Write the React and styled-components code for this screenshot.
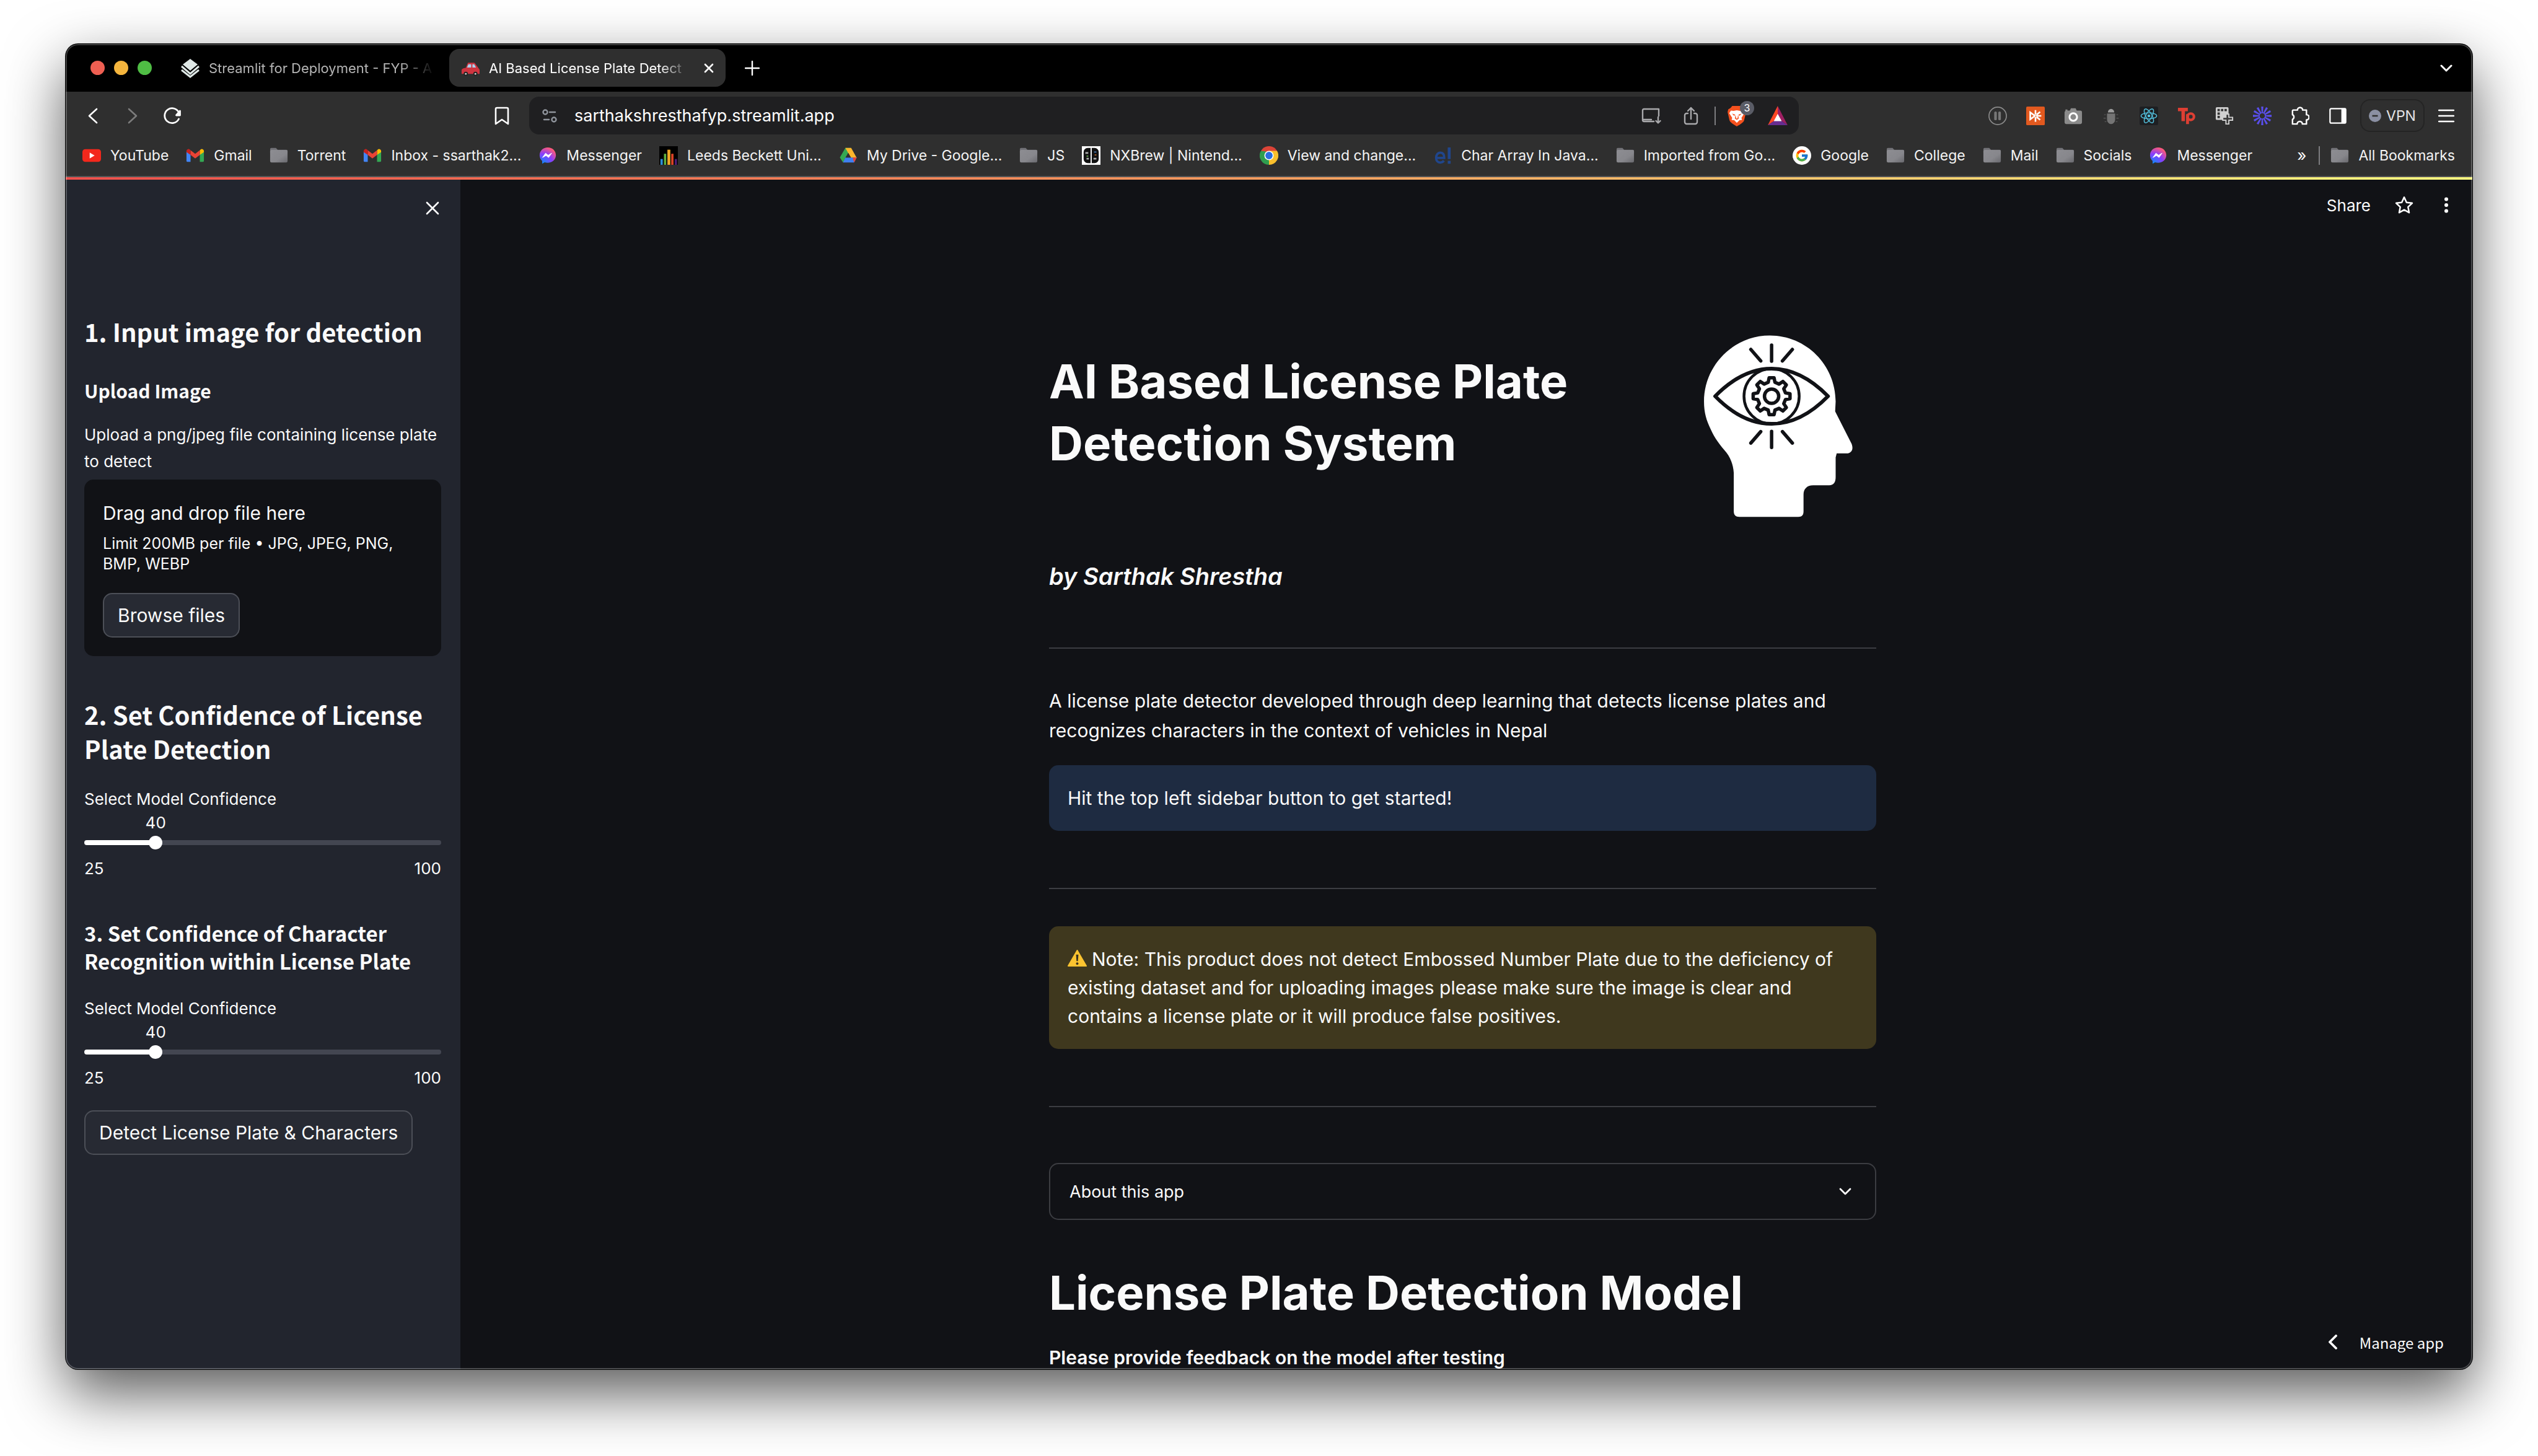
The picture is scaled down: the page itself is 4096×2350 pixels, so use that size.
import React, { useState } from "react";
import styled, { createGlobalStyle, css } from "styled-components";
import { FcGoogle } from "react-icons/fc";

const ui = `"Inter", "Liberation Sans", sans-serif`;
const heading = `"Noto Sans CJK JP", "Noto Sans", sans-serif`;

const Global = createGlobalStyle`
  *, *::before, *::after { box-sizing: border-box; }
  body { margin: 0; background: #fff; font-family: ${ui}; color: #fafafa; }
  h1, h2, h3, h4, p { margin: 0; }
  a { color: inherit; text-decoration: none; }
  button, input { font-family: inherit; color: inherit; }
  svg { display: block; flex: none; }
`;

/* ---------- Window ---------- */
const Desktop = styled.div`
  display: flex;
  height: 100vh;
  padding: 71px 106px 140px;
  background: #fff;
  overflow: hidden;
`;
const BrowserWindow = styled.div`
  position: relative;
  flex: 1;
  min-width: 0;
  display: flex;
  flex-direction: column;
  border-radius: 20px;
  overflow: hidden;
  background: #111216;
  box-shadow: 0 0 0 1px #000, 0 38px 96px rgba(0, 0, 0, 0.66);
  &::after {
    content: "";
    position: absolute;
    inset: 0;
    border-radius: inherit;
    box-shadow: inset 0 0 0 2px rgba(255, 255, 255, 0.24);
    pointer-events: none;
  }
`;
const bare = css`
  border: 0;
  padding: 0;
  background: none;
  cursor: pointer;
`;

/* ---------- Tab strip ---------- */
const TabStrip = styled.header`
  display: flex;
  align-items: center;
  height: 77px;
  padding: 0 10px 0 40px;
  background: #000;
`;
const Lights = styled.div`
  display: flex;
  gap: 15px;
  margin-right: 27px;
`;
const Light = styled.button`
  ${bare}
  width: 23px;
  height: 23px;
  border-radius: 50%;
  background: ${(p) => p.$color};
`;
const Tab = styled.div`
  display: flex;
  align-items: center;
  gap: 14px;
  width: 446px;
  height: 61px;
  padding: 0 13px 0 19px;
  margin-right: 7px;
  border-radius: 16px;
  background: ${(p) => (p.$active ? "#2f2f2f" : "transparent")};
  color: ${(p) => (p.$active ? "#fff" : "#b4b4b4")};
`;
const TabTitle = styled.button`
  ${bare}
  flex: 1;
  min-width: 0;
  text-align: left;
  white-space: nowrap;
  font-size: 22px;
  line-height: 32px;
  mask-image: linear-gradient(90deg, #000 84%, transparent 99%);
`;
const IconButton = styled.button`
  ${bare}
  display: flex;
  align-items: center;
  justify-content: center;
  width: ${(p) => p.$w || 61}px;
  height: 61px;
`;
const Push = styled.div`
  flex: 1;
`;

/* ---------- Toolbar ---------- */
const Toolbar = styled.nav`
  background: #2f2f2f;
  border-bottom: 2px solid #565656;
`;
const ToolbarRow = styled.div`
  display: flex;
  align-items: center;
  padding: 8px 12px 0;
`;
const NavGroup = styled.div`
  display: flex;
  width: 724px;
  margin-right: 12px;
`;
const AddressBar = styled.div`
  display: flex;
  align-items: center;
  flex: 1;
  height: 61px;
  padding: 0 2px 0 1px;
  border-radius: 16px;
  background: #1f1f21;
`;
const Address = styled.input`
  flex: 1;
  min-width: 0;
  border: 0;
  outline: 0;
  padding: 0 8px;
  background: none;
  color: #fff;
  font-size: 27px;
`;
const Separator = styled.span`
  width: 2px;
  height: 30px;
  margin-left: 6px;
  background: #7d7d80;
`;
const ShieldBadge = styled.span`
  position: absolute;
  top: 7px;
  right: 6px;
  width: 23px;
  height: 23px;
  border-radius: 50%;
  background: #5a5c66;
  color: #fff;
  font-size: 16px;
  line-height: 23px;
  text-align: center;
`;
const ShieldButton = styled(IconButton)`
  position: relative;
`;
const ExtensionGroup = styled.div`
  display: flex;
  align-items: center;
  justify-content: flex-end;
  width: 1075px;
`;
const VpnButton = styled.button`
  ${bare}
  display: flex;
  align-items: center;
  justify-content: center;
  gap: 8px;
  width: 104px;
  height: 53px;
  margin: 0 4px 0 6px;
  border: 2px solid #242424;
  border-radius: 16px;
  color: #e4e4e6;
  font-size: 23px;
`;

/* ---------- Bookmarks ---------- */
const BookmarkBar = styled.div`
  display: flex;
  align-items: center;
  height: 67px;
  padding: 0 28px 0 27px;
`;
const BookmarkList = styled.div`
  display: flex;
  gap: 28px;
`;
const Bookmark = styled.a`
  display: flex;
  align-items: center;
  gap: 15px;
  font-size: 23px;
  line-height: 30px;
  color: #f4f4f4;
  white-space: nowrap;
`;
const Overflow = styled.button`
  ${bare}
  padding: 0 14px;
  font-size: 26px;
  line-height: 30px;
`;
const AllBookmarks = styled(Bookmark)`
  margin-left: 17px;
`;

/* ---------- Page ---------- */
const Rainbow = styled.div`
  height: 4px;
  flex: none;
  background: linear-gradient(90deg, #ee4f4b, #f79c5e 50%, #fffd80);
`;
const Page = styled.div`
  display: flex;
  flex: 1;
  min-height: 0;
`;
const Sidebar = styled.aside`
  display: flex;
  flex-direction: column;
  flex: none;
  width: 637px;
  padding: 0 31px 0 30px;
  background: #22252e;
`;
const SidebarTop = styled.div`
  display: flex;
  justify-content: flex-end;
  height: 221px;
  padding-top: 15px;
  margin-right: -16px;
`;
const SideHeading = styled.h2`
  font-family: ${heading};
  font-weight: 700;
  font-size: ${(p) => p.$size || 40}px;
  line-height: ${(p) => p.$line || 55}px;
  margin-top: ${(p) => p.$gap || 0}px;
`;
const FieldLabel = styled.label`
  font-size: 26px;
  line-height: 43px;
  margin-top: 32px;
`;
const DropZone = styled.section`
  display: flex;
  flex-direction: column;
  align-items: flex-start;
  margin-top: 8px;
  padding: 30px;
  border-radius: 15px;
  background: #111216;
`;
const DropTitle = styled.p`
  font-size: 30px;
  line-height: 48px;
`;
const DropHint = styled.p`
  margin: 9px 0 30px;
  font-size: 25px;
  line-height: 33px;
`;
const OutlineButton = styled.button`
  align-self: flex-start;
  height: 72px;
  margin-top: ${(p) => p.$gap || 0}px;
  padding: 0 22px;
  border: 2px solid #4c4f57;
  border-radius: 15px;
  background: #272a33;
  font-size: 30px;
  cursor: pointer;
`;
const SliderValue = styled.output`
  display: block;
  width: ${(p) => p.$percent * 2}%;
  margin: 1px 0 6px;
  text-align: center;
  font-size: 26px;
  line-height: 31px;
`;
const SliderTrack = styled.div`
  display: flex;
  align-items: center;
  height: 8px;
  margin: 7px 0;
  border-radius: 4px;
  background: linear-gradient(90deg, #fff ${(p) => p.$percent}%, #434651 ${(p) => p.$percent}%);
`;
const SliderInput = styled.input`
  appearance: none;
  flex: 1;
  height: 22px;
  margin: 0 -11px;
  background: none;
  &::-webkit-slider-thumb {
    appearance: none;
    width: 22px;
    height: 22px;
    border-radius: 50%;
    background: #fff;
  }
`;
const SliderEnds = styled.div`
  display: flex;
  justify-content: space-between;
  margin-top: 16px;
  font-size: 26px;
  line-height: 30px;
`;

const Main = styled.main`
  position: relative;
  flex: 1;
  min-width: 0;
  overflow: hidden;
  padding-right: 12px;
`;
const AppHeader = styled.div`
  display: flex;
  align-items: center;
  justify-content: flex-end;
  height: 82px;
  margin: 0 -4px 153px 0;
`;
const ShareButton = styled.button`
  ${bare}
  font-size: 26px;
  margin-right: 20px;
`;
const Column = styled.div`
  display: flex;
  flex-direction: column;
  max-width: 1335px;
  margin: 0 auto;
`;
const Hero = styled.div`
  display: grid;
  grid-template-columns: 3fr 1fr;
  gap: 30px;
`;
const Title = styled.h1`
  font-weight: 700;
  font-size: 76px;
  line-height: ${(p) => p.$line || 100}px;
  padding-top: ${(p) => p.$pad || 0}px;
`;
const Byline = styled.h3`
  margin-top: 56px;
  font-size: 38px;
  line-height: 46px;
  font-weight: 600;
  font-style: italic;
`;
const Rule = styled.hr`
  width: 100%;
  height: 2px;
  margin: 92px 0 0;
  border: 0;
  background: #3c3d42;
`;
const Paragraph = styled.p`
  margin: 60px 0 32px;
  font-size: 30px;
  line-height: 48px;
`;
const Alert = styled.div`
  margin-top: ${(p) => p.$gap || 0}px;
  padding: 30px;
  border-radius: 15px;
  background: ${(p) => p.$color};
  font-size: 30px;
  line-height: 46px;
`;
const InlineIcon = styled.span`
  display: inline-block;
  margin-right: 8px;
  vertical-align: -3px;
`;
const Expander = styled.details`
  margin: 90px 0 71px;
  border: 2px solid #3c3d42;
  border-radius: 15px;
`;
const ExpanderSummary = styled.summary`
  display: flex;
  align-items: center;
  justify-content: space-between;
  height: 88px;
  padding: 0 38px 0 31px;
  font-size: 27px;
  list-style: none;
  cursor: pointer;
`;
const Feedback = styled.h4`
  margin-top: 40px;
  font-size: 30px;
  line-height: 38px;
  font-weight: 600;
`;
const ManageApp = styled.button`
  ${bare}
  position: absolute;
  right: 46px;
  bottom: 14px;
  display: flex;
  align-items: center;
  gap: 36px;
  height: 60px;
  font-family: ${heading};
  font-size: 24px;
`;

/* ---------- Icons ---------- */
const Line = ({ w = 24, h = 24, box = "0 0 24 24", sw = 2, color = "#fff", children }) => (
  <svg width={w} height={h} viewBox={box} fill="none" stroke={color} strokeWidth={sw} strokeLinecap="round" strokeLinejoin="round">
    {children}
  </svg>
);
const Pic = ({ size = 30, box = "0 0 32 32", children }) => (
  <svg width={size} height={size} viewBox={box}>{children}</svg>
);

const Folder = () => (
  <Pic>
    <defs>
      <linearGradient id="folder" x1="0" y1="0" x2="1" y2="1">
        <stop offset="0" stopColor="#8d8d92" />
        <stop offset=".6" stopColor="#87878c" />
        <stop offset="1" stopColor="#69696e" />
      </linearGradient>
    </defs>
    <path d="M1 5a2 2 0 0 1 2-2h8l3 3h15a2 2 0 0 1 2 2v3H1z" fill="#727277" />
    <rect x="1" y="6.500" width="30" height="21.500" rx="2.500" fill="url(#folder)" />
  </Pic>
);
const Gmail = () => (
  <Pic>
    <path d="M1 8v17a2 2 0 0 0 2 2h5V13z" fill="#4285f4" />
    <path d="M31 8v17a2 2 0 0 1-2 2h-5V13z" fill="#34a853" />
    <path d="M24 7v8l7-5V8.500c0-3-3.500-4.500-5.500-3z" fill="#fbbc04" />
    <path d="M8 15V7l8 6 8-6v8l-8 6z" fill="#ea4335" />
    <path d="M1 8.500V10l7 5V7L6.500 5.500C4.500 4 1 5.500 1 8.500z" fill="#c5221f" />
  </Pic>
);
const YouTube = () => (
  <Pic>
    <rect x="0" y="5" width="32" height="22" rx="5" fill="#f3281c" />
    <path d="M12.500 11v10l8.500-5z" fill="#fff" />
  </Pic>
);
const Messenger = () => (
  <Pic>
    <defs>
      <radialGradient id="msgr" cx=".2" cy="1" r="1.100">
        <stop offset="0" stopColor="#0a8dff" />
        <stop offset=".55" stopColor="#8a3dff" />
        <stop offset=".95" stopColor="#ff5a78" />
      </radialGradient>
    </defs>
    <path d="M16 2C8 2 2 7.700 2 15.500c0 4 1.700 7.500 4.400 9.900V30l4.200-2.300c1.700.5 3.500.8 5.400.8 8 0 14-5.700 14-13.200S24 2 16 2z" fill="url(#msgr)" />
    <path d="M7 19.500l5.200-7.500 4.500 3.500 6-3.500-5.200 7.500-4.500-3.500z" fill="#fff" stroke="#fff" strokeLinejoin="round" />
  </Pic>
);
const Leeds = () => (
  <Pic>
    <rect width="32" height="32" fill="#000" />
    <rect x="2" y="22" width="4" height="10" fill="#2f8fd8" />
    <rect x="8" y="13" width="4" height="19" fill="#5fae3c" />
    <rect x="14" y="6" width="5" height="26" fill="#f0a827" />
    <rect x="20.500" y="13" width="4" height="19" fill="#dd4426" />
    <rect x="26.500" y="22" width="4" height="10" fill="#4a1d73" />
  </Pic>
);
const Drive = () => (
  <Pic>
    <path d="M11 3h10l-10.500 18L7 28 1.500 19.500z" fill="#34a853" />
    <path d="M11 3h10l9.500 17H20.500z" fill="#fbb62c" />
    <path d="M7 28l4-8.500h19.500L26 28z" fill="#3f7ff0" />
    <path d="M23.500 19.500h7L26 28z" fill="#ea4335" />
    <path d="M16 11.500l4.700 8H11.300z" fill="#2f2f2f" />
  </Pic>
);
const NxBrew = () => (
  <Pic>
    <rect width="32" height="32" fill="#fff" />
    <path d="M15 3v26h-5a7 7 0 0 1-7-7V10a7 7 0 0 1 7-7zM17 3v26h5a7 7 0 0 0 7-7V10a7 7 0 0 0-7-7z" fill="#111" />
    <path d="M6 10h5v3H6zM8 20h4v3H8zM20 20h5v3h-5z" fill="#aaa" />
    <path d="M21 9h4v2h-4z" fill="#4a7bb5" /><path d="M8 16h3v2H8z" fill="#5b9a46" /><path d="M22 14h3v2h-3z" fill="#b4642d" />
  </Pic>
);
const Chrome = () => (
  <Pic>
    <path d="M16 16L2.100 8a16 16 0 0 1 27.800 0z" fill="#db4437" />
    <path d="M16 16L29.900 8a16 16 0 0 1-13.900 24z" fill="#fbc02d" />
    <path d="M16 16v16A16 16 0 0 1 2.100 8z" fill="#2f9e4f" />
    <path d="M16 8h13.900L22 19z" fill="#fbc02d" /><path d="M9 20L2.100 8l9 1z" fill="#2f9e4f" />
    <circle cx="16" cy="16" r="8" fill="#fff" />
    <circle cx="16" cy="16" r="6.300" fill="#2a6ee0" />
  </Pic>
);
const Edureka = () => (
  <Pic>
    <path d="M5 20h14c0-6-2-9-6.500-9S5 15 5 20s3 8 7 8c3 0 5-1 6.500-3" fill="none" stroke="#20468c" strokeWidth="4" />
    <path d="M25 2h5v20h-5zM25 25h5v5h-5z" fill="#20468c" />
  </Pic>
);
const GoogleG = () => (
  <Pic>
    <circle cx="16" cy="16" r="16" fill="#fff" />
    <g transform="translate(4 4)"><FcGoogle size={24} /></g>
  </Pic>
);
const StreamlitDiscuss = () => (
  <Pic size={32}>
    <path d="M16 1l12 9-12 10L4 10z" fill="#dfe8e6" />
    <path d="M2 13l14 12 14-12M2 19l14 11 14-11" fill="none" stroke="#dfe8e6" strokeWidth="3" />
  </Pic>
);
const Car = () => (
  <Pic size={31}>
    <path d="M8 16l3-7c.4-1 1-1.500 2-1.500h8c1 0 2 .5 2.600 1.500L28 15l3 4v7H1v-6c0-2 2-3 4-3.500z" fill="#cf3540" />
    <path d="M10 15.500l2.300-5.500H17v5.500zM19 15.500V10h3l3 5.500z" fill="#a9d3ee" />
    <circle cx="8" cy="26" r="3.500" fill="#222" /><circle cx="24" cy="26" r="3.500" fill="#222" />
    <circle cx="8" cy="26" r="1.500" fill="#ccc" /><circle cx="24" cy="26" r="1.500" fill="#ccc" />
  </Pic>
);
const Warning = () => (
  <Pic size={31}>
    <path d="M16 3L31 29H1z" fill="#fcc430" stroke="#fcc430" strokeWidth="2" strokeLinejoin="round" />
    <path d="M14 10h4l-.8 11h-2.400z" fill="#3a3320" /><circle cx="16" cy="25" r="2" fill="#3a3320" />
  </Pic>
);
const Shield = () => (
  <Pic size={34}>
    <path d="M9 1h14l2.500 3L29 6l1 4-3 13c-1 3-6 6-11 9-5-3-10-6-11-9L2 10l1-4 3.500-2z" fill="#f4511e" />
    <path d="M7 8l4 .5 5-1 5 1 4-.5 2.500 4-4.500 7 1 3-4 .5-4 4-4-4-4-.5 1-3-4.500-7z" fill="#fff" />
    <path d="M8.500 12.500l5 1.500-1.500 2zM23.500 12.500l-5 1.500 1.500 2zM14 14l-1 6 3 2 3-2-1-6-1 6h-2z" fill="#f4511e" />
  </Pic>
);
const Rewards = () => (
  <Pic size={34}>
    <path d="M16 1v14l-4.500 8L1 30z" fill="#ff4724" />
    <path d="M16 1l15 29-10.500-7L16 15z" fill="#9e1f63" />
    <path d="M1 30l10.500-7h9L31 30z" fill="#662d91" />
    <path d="M16 13l6 11H10z" fill="#fff" />
  </Pic>
);

const ExtPause = () => (
  <Pic>
    <circle cx="16" cy="16" r="15" fill="none" stroke="#8a8a8a" strokeWidth="1.800" />
    <rect x="10" y="8.500" width="4.500" height="15" rx="2" fill="#777" /><rect x="17" y="8.500" width="4.500" height="15" rx="2" fill="#777" />
  </Pic>
);
const ExtOrange = () => (
  <Pic>
    <rect width="32" height="32" rx="2" fill="#e2591f" />
    <path d="M7 10v12l8-6zM16 6v8M16 18v8M17 16h9M18 14l6-5M18 18l6 5" fill="none" stroke="#fff" strokeWidth="2.800" />
  </Pic>
);
const ExtCamera = () => (
  <Pic>
    <path d="M10 7l2-4h8l2 4h6a3 3 0 0 1 3 3v17a3 3 0 0 1-3 3H4a3 3 0 0 1-3-3V10a3 3 0 0 1 1.500-2.500V5H6v2z" fill="#8b8b8b" />
    <circle cx="16" cy="18" r="6.500" fill="#888" stroke="#fff" strokeWidth="3.200" />
  </Pic>
);
const ExtBug = () => (
  <Pic>
    <path d="M10.500 10a5.500 6 0 0 1 11 0z" fill="#9c9c9c" />
    <path d="M9 12h14v10a7 8 0 0 1-14 0z" fill="#747474" />
    <path d="M7 14H4M7 20H3M8 26H5M25 14h3M25 20h4M24 26h3" stroke="#555" strokeWidth="1.500" />
  </Pic>
);
const ExtReact = () => (
  <Pic>
    <rect width="32" height="32" rx="3" fill="#1d1f22" />
    <g fill="none" stroke="#53c1de" strokeWidth="1.500">
      <ellipse cx="16" cy="16" rx="13.500" ry="5.200" />
      <ellipse cx="16" cy="16" rx="13.500" ry="5.200" transform="rotate(60 16 16)" />
      <ellipse cx="16" cy="16" rx="13.500" ry="5.200" transform="rotate(120 16 16)" />
    </g>
    <circle cx="16" cy="16" r="2.500" fill="#53c1de" />
  </Pic>
);
const ExtTp = () => (
  <Pic>
    <path d="M1 2h17v6h-5v17H7V8H1z" fill="#dd3f33" />
    <path d="M17.500 30V13" stroke="#dd3f33" strokeWidth="5" />
    <circle cx="23" cy="17.500" r="5.500" fill="none" stroke="#dd3f33" strokeWidth="4.500" />
  </Pic>
);
const ExtGrid = () => (
  <Pic>
    <rect x="1" y="1" width="22" height="22" rx="2" fill="#d0d0d0" />
    <path d="M4 4h4v4H4zM10 4h4v4h-4zM16 4h4v4h-4zM4 10h4v4H4zM4 16h4v4H4z" fill="#333" />
    <path d="M18.500 13h5v5.500H30v5h-6.500V30h-5v-6.500H13v-5h5.500z" fill="#3a3a3a" stroke="#d0d0d0" strokeWidth="2" />
  </Pic>
);
const ExtBurst = () => (
  <Pic>
    {Array.from({ length: 12 }, (_, i) => (
      <path key={i} d="M15.200 11L14.500 0h3l-.7 11z" fill="#5b50f0" stroke="#5b50f0" strokeWidth=".6" transform={`rotate(${i * 30} 16 16)`} />
    ))}
    <circle cx="16" cy="16" r="5.500" fill="none" stroke="#5b50f0" strokeWidth="1.500" />
  </Pic>
);
const Puzzle = () => (
  <Line w={30} h={30} box="0 0 32 32" sw={2.600}>
    <path d="M4 6h7.500a4.500 4.500 0 0 1 9 0H27v8a4.500 4.500 0 0 1 0 9v7h-7a4.500 4.500 0 0 0-9 0H3v-8a4.500 4.500 0 0 0 0-8V7z" />
  </Line>
);
const SidePanel = () => (
  <Pic>
    <rect x="2.500" y="3.500" width="27" height="25" rx="2" fill="none" stroke="#fff" strokeWidth="2.400" />
    <rect x="22" y="3" width="8" height="26" fill="#fff" />
  </Pic>
);

const gearPath = (() => {
  const points = [];
  const teeth = 8;
  const step = (Math.PI * 2) / teeth;
  for (let i = 0; i < teeth; i++) {
    const a = i * step - Math.PI / 2;
    [[-0.3, 23], [-0.17, 30], [0.17, 30], [0.3, 23]].forEach(([f, r]) => {
      const t = a + f * step;
      points.push(`${(157 + r * Math.cos(t)).toFixed(1)} ${(114.4 + r * Math.sin(t)).toFixed(1)}`);
    });
  }
  return `M${points.join("L")}Z`;
})();

const VisionHead = () => (
  <svg width="100%" viewBox="0 0 326 326" role="img" aria-label="Artificial vision">
    <path
      fill="#fff"
      d="M154 16.500C213 16.500 260 64 260.300 123L259.500 139L286 191C289 199 287 205 280 206.500H262L260.300 213V245C260.300 253 257 258 250 258H224C214 258 208.500 264 208.500 273V300C208.500 306 206 309 200 309H105C99 309 96 306 96 300V238C95 225 91 214 84 205C74 193 65 182 59 168C52 154 48 141 48 123C48 64 96 16.500 154 16.500Z"
    />
    <g fill="none" stroke="#111216" strokeLinecap="round" strokeLinejoin="round">
      <path strokeWidth="6" d="M66 114.400C94 86 124 70 157 70S220 86 248 114.400C220 143 190 159 157 159S94 143 66 114.400Z" />
      <circle cx="157" cy="114.400" r="44.500" strokeWidth="4.500" />
      <path strokeWidth="5.500" d={gearPath} />
      <circle cx="157" cy="114.400" r="11.500" strokeWidth="5.500" />
      <path strokeWidth="5.500" d="M157 32V58M123.500 39L139.500 57.500M190.500 39L174.500 57.500M157 171V197M139.500 171.500L123.500 190M174.500 171.500L190.500 190" />
    </g>
  </svg>
);

/* ---------- Data ---------- */
const bookmarks = [
  ["YouTube", YouTube],
  ["Gmail", Gmail],
  ["Torrent", Folder],
  ["Inbox - ssarthak2...", Gmail],
  ["Messenger", Messenger],
  ["Leeds Beckett Uni...", Leeds],
  ["My Drive - Google...", Drive],
  ["JS", Folder],
  ["NXBrew | Nintend...", NxBrew],
  ["View and change...", Chrome],
  ["Char Array In Java...", Edureka],
  ["Imported from Go...", Folder],
  ["Google", GoogleG],
  ["College", Folder],
  ["Mail", Folder],
  ["Socials", Folder],
  ["Messenger", Messenger],
];
const extensions = [
  ["Pause", ExtPause],
  ["Perplexity", ExtOrange],
  ["Screenshot", ExtCamera],
  ["Debugger", ExtBug],
  ["React tools", ExtReact],
  ["Type tools", ExtTp],
  ["Grid capture", ExtGrid],
  ["Loom", ExtBurst],
  ["Extensions", Puzzle],
  ["Side panel", SidePanel],
];

function ConfidenceSlider({ id }) {
  const [value, setValue] = useState(40);
  const percent = ((value - 25) / 75) * 100;
  return (
    <>
      <FieldLabel htmlFor={id}>Select Model Confidence</FieldLabel>
      <SliderValue htmlFor={id} $percent={percent}>{value}</SliderValue>
      <SliderTrack $percent={percent}>
        <SliderInput id={id} type="range" min="25" max="100" value={value} onChange={(e) => setValue(+e.target.value)} />
      </SliderTrack>
      <SliderEnds>
        <span>25</span>
        <span>100</span>
      </SliderEnds>
    </>
  );
}

function BrowserChrome() {
  return (
    <>
      <TabStrip>
        <Lights>
          <Light $color="#ee5f52" aria-label="Close window" />
          <Light $color="#f5b53d" aria-label="Minimise" />
          <Light $color="#4fbd44" aria-label="Zoom" />
        </Lights>
        <Tab>
          <StreamlitDiscuss />
          <TabTitle>Streamlit for Deployment - FYP - A</TabTitle>
        </Tab>
        <Tab $active>
          <Car />
          <TabTitle>AI Based License Plate Detect</TabTitle>
          <IconButton $w={28} aria-label="Close tab">
            <Line w={16} h={16} box="0 0 16 16" sw={2.600}><path d="M2 2l12 12M14 2L2 14" /></Line>
          </IconButton>
        </Tab>
        <IconButton $w={72} aria-label="New tab">
          <Line w={24} h={24} sw={2.400}><path d="M12 1v22M1 12h22" /></Line>
        </IconButton>
        <Push />
        <IconButton $w={64} aria-label="Search tabs">
          <Line w={20} h={12} box="0 0 20 12" sw={3}><path d="M2 2l8 8 8-8" /></Line>
        </IconButton>
      </TabStrip>
      <Toolbar>
        <ToolbarRow>
          <NavGroup>
            <IconButton $w={64} aria-label="Back"><Line w={16} h={26} box="0 0 16 26" sw={2.600}><path d="M14 2L2 13l12 11" /></Line></IconButton>
            <IconButton $w={64} aria-label="Forward"><Line w={16} h={26} box="0 0 16 26" color="#7c7c7c" sw={2.600}><path d="M2 2l12 11L2 24" /></Line></IconButton>
            <IconButton $w={64} aria-label="Reload">
              <Line w={30} h={30} box="0 0 30 30" sw={2.800}><path d="M25.500 20A12 12 0 1 1 26 10.500" /><path d="M27.500 7v7h-6z" fill="#fff" /></Line>
            </IconButton>
            <Push />
            <IconButton $w={64} aria-label="Bookmark this page"><Line w={24} h={30} box="0 0 24 30" sw={2.600}><path d="M2 4a2 2 0 0 1 2-2h16a2 2 0 0 1 2 2v24l-10-7-10 7z" /></Line></IconButton>
          </NavGroup>
          <AddressBar>
            <IconButton $w={64} aria-label="Site information">
              <Line w={24} h={24} color="#8f949c" sw={2.400}><circle cx="5" cy="6" r="3.500" /><path d="M12 6h9M3 18h8" /><circle cx="19" cy="18" r="3.500" /></Line>
            </IconButton>
            <Address aria-label="Address" defaultValue="sarthakshresthafyp.streamlit.app" />
            <IconButton $w={64} aria-label="Install app">
              <Line w={32} h={26} box="0 0 32 26" color="#a9a9ac" sw={2.400}><path d="M20 22H4a2 2 0 0 1-2-2V4a2 2 0 0 1 2-2h24v11M2 19h14M27 15v9M23.500 21l3.500 3.500 3.500-3.500" /></Line>
            </IconButton>
            <IconButton $w={64} aria-label="Share page">
              <Line w={24} h={30} box="0 0 24 30" color="#a9a9ac" sw={2.400}><path d="M7 11H5a3 3 0 0 0-3 3v11a3 3 0 0 0 3 3h14a3 3 0 0 0 3-3V14a3 3 0 0 0-3-3h-2M12 20V2M7 7l5-5 5 5" /></Line>
            </IconButton>
            <Separator />
            <ShieldButton $w={68} aria-label="Brave Shields"><Shield /><ShieldBadge>3</ShieldBadge></ShieldButton>
            <IconButton $w={64} aria-label="Brave Rewards"><Rewards /></IconButton>
          </AddressBar>
          <ExtensionGroup>
            {extensions.map(([name, Icon]) => (
              <IconButton key={name} aria-label={name}><Icon /></IconButton>
            ))}
            <VpnButton>
              <Pic size={20} box="0 0 20 20"><circle cx="10" cy="10" r="10" fill="#8b90a3" /><path d="M5.500 10h9" stroke="#2f2f2f" strokeWidth="2.500" /></Pic>
              VPN
            </VpnButton>
            <IconButton aria-label="Menu"><Line w={26} h={22} box="0 0 26 22" sw={2.400}><path d="M1 2h24M1 11h24M1 20h24" /></Line></IconButton>
          </ExtensionGroup>
        </ToolbarRow>
        <BookmarkBar>
          <BookmarkList>
            {bookmarks.map(([name, Icon], i) => (
              <Bookmark key={i} href="#"><Icon />{name}</Bookmark>
            ))}
          </BookmarkList>
          <Push />
          <Overflow aria-label="More bookmarks">»</Overflow>
          <Separator />
          <AllBookmarks href="#"><Folder />All Bookmarks</AllBookmarks>
        </BookmarkBar>
      </Toolbar>
    </>
  );
}

export default function App() {
  return (
    <>
      <Global />
      <Desktop>
        <BrowserWindow>
          <BrowserChrome />
          <Rainbow />
          <Page>
            <Sidebar>
              <SidebarTop>
                <IconButton aria-label="Close sidebar">
                  <Line w={22} h={22} box="0 0 22 22" sw={2.600}><path d="M2 2l18 18M20 2L2 20" /></Line>
                </IconButton>
              </SidebarTop>
              <SideHeading $line={48}>1. Input image for detection</SideHeading>
              <SideHeading as="h3" $size={30} $line={36} $gap={53}>Upload Image</SideHeading>
              <FieldLabel htmlFor="plate-file">Upload a png/jpeg file containing license plate to detect</FieldLabel>
              <DropZone>
                <DropTitle>Drag and drop file here</DropTitle>
                <DropHint>Limit 200MB per file • JPG, JPEG, PNG, BMP, WEBP</DropHint>
                <OutlineButton>Browse files</OutlineButton>
                <input id="plate-file" type="file" hidden />
              </DropZone>
              <SideHeading $gap={67}>2. Set Confidence of License Plate Detection</SideHeading>
              <ConfidenceSlider id="plate-confidence" />
              <SideHeading as="h3" $size={33} $line={45} $gap={67}>3. Set Confidence of Character Recognition within License Plate</SideHeading>
              <ConfidenceSlider id="character-confidence" />
              <OutlineButton $gap={37}>Detect License Plate &amp; Characters</OutlineButton>
            </Sidebar>
            <Main>
              <AppHeader>
                <ShareButton>Share</ShareButton>
                <IconButton $w={68} aria-label="Favourite">
                  <Line w={32} h={32} sw={1.900}><path d="M12 2.500l2.900 6.300 6.800.8-5 4.700 1.300 6.800-6-3.400-6 3.400 1.300-6.800-5-4.700 6.800-.8z" /></Line>
                </IconButton>
                <IconButton $w={68} aria-label="Options">
                  <Pic size={28} box="0 0 28 28"><g fill="#fff"><circle cx="14" cy="4.500" r="3" /><circle cx="14" cy="14" r="3" /><circle cx="14" cy="23.500" r="3" /></g></Pic>
                </IconButton>
              </AppHeader>
              <Column>
                <Hero>
                  <Title $pad={40}>AI Based License Plate Detection System</Title>
                  <VisionHead />
                </Hero>
                <Byline>by Sarthak Shrestha</Byline>
                <Rule />
                <Paragraph>
                  A license plate detector developed through deep learning that detects license plates and recognizes characters in the context of vehicles in Nepal
                </Paragraph>
                <Alert $color="#1e2b41">Hit the top left sidebar button to get started!</Alert>
                <Rule />
                <Alert $color="#3f381e" $gap={60}>
                  <InlineIcon><Warning /></InlineIcon>
                  Note: This product does not detect Embossed Number Plate due to the deficiency of existing dataset and for uploading images please make sure the image is clear and contains a license plate or it will produce false positives.
                </Alert>
                <Rule />
                <Expander>
                  <ExpanderSummary>
                    About this app
                    <Line w={20} h={13} box="0 0 20 13" sw={2.800}><path d="M2 2l8 8 8-8" /></Line>
                  </ExpanderSummary>
                </Expander>
                <Title as="h2" $line={92}>License Plate Detection Model</Title>
                <Feedback>Please provide feedback on the model after testing</Feedback>
              </Column>
              <ManageApp>
                <Line w={14} h={24} box="0 0 14 24" sw={3.800}><path d="M12 2L2 12l10 10" /></Line>
                Manage app
              </ManageApp>
            </Main>
          </Page>
        </BrowserWindow>
      </Desktop>
    </>
  );
}
